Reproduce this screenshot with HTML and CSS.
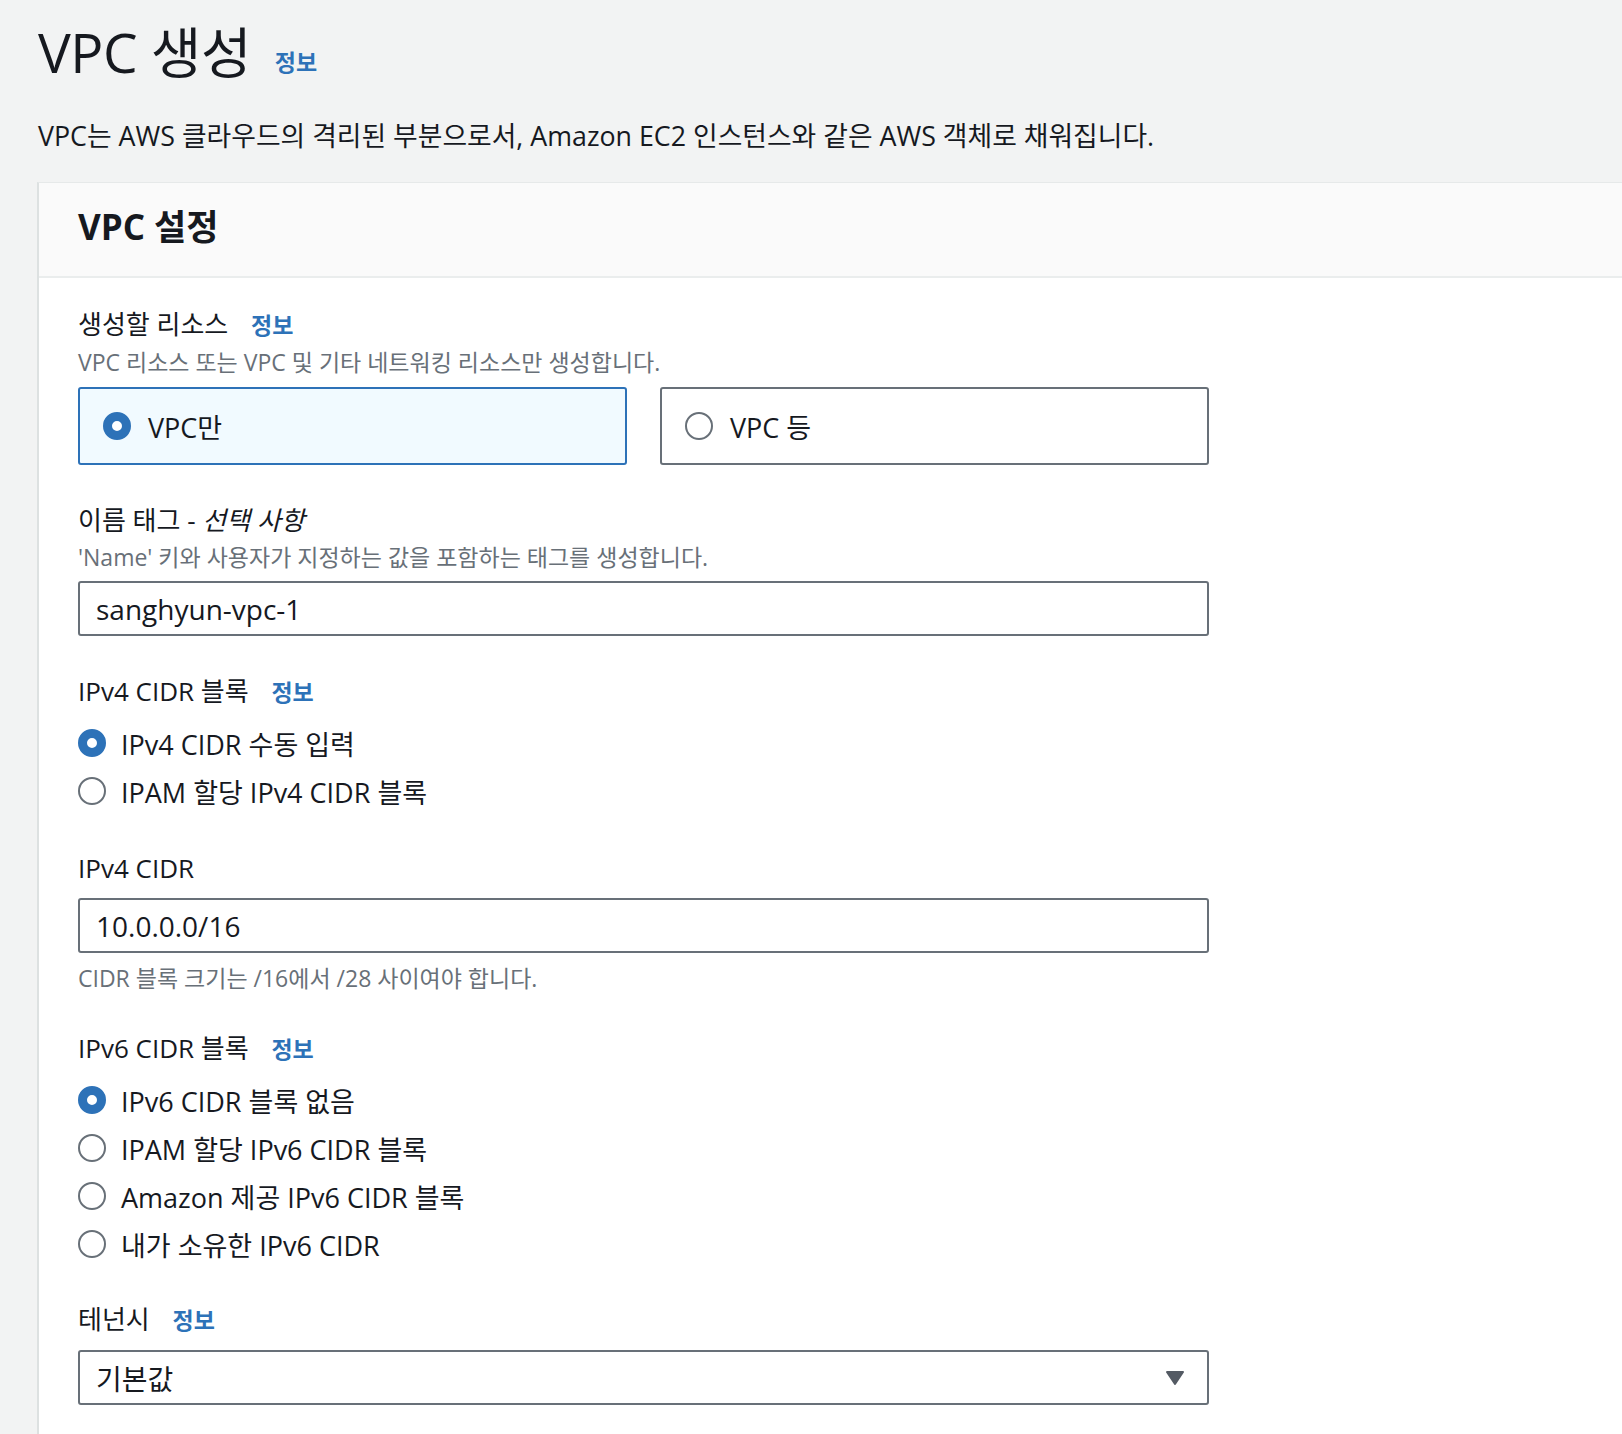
FILE: index.html
```html
<!DOCTYPE html>
<html lang="ko">
<head>
    <meta charset="UTF-8">
    <meta name="viewport" content="width=device-width, initial-scale=1.0">
    <title>VPC 생성</title>
    <link rel="stylesheet" href="styles.css">
</head>
<body>
    <div class="page">
        <div class="page-header">
            <h1>VPC 생성 <a class="info" href="#">정보</a></h1>
            <p class="page-desc">VPC는 AWS 클라우드의 격리된 부분으로서, Amazon EC2 인스턴스와 같은 AWS 객체로 채워집니다.</p>
        </div>

        <div class="card">
            <div class="card-header">
                <h2>VPC 설정</h2>
            </div>
            <div class="card-body">

                <div class="field">
                    <div class="label">생성할 리소스 <a class="info" href="#">정보</a></div>
                    <div class="hint">VPC 리소스 또는 VPC 및 기타 네트워킹 리소스만 생성합니다.</div>
                    <div class="tiles">
                        <label class="tile selected">
                            <span class="radio checked"></span>
                            <span>VPC만</span>
                        </label>
                        <label class="tile">
                            <span class="radio"></span>
                            <span>VPC 등</span>
                        </label>
                    </div>
                </div>

                <div class="field">
                    <div class="label">이름 태그 - <em>선택 사항</em></div>
                    <div class="hint">'Name' 키와 사용자가 지정하는 값을 포함하는 태그를 생성합니다.</div>
                    <div class="input">sanghyun-vpc-1</div>
                </div>

                <div class="field">
                    <div class="label">IPv4 CIDR 블록 <a class="info" href="#">정보</a></div>
                    <div class="radio-group">
                        <label class="radio-row"><span class="radio checked"></span>IPv4 CIDR 수동 입력</label>
                        <label class="radio-row"><span class="radio"></span>IPAM 할당 IPv4 CIDR 블록</label>
                    </div>
                </div>

                <div class="field spaced">
                    <div class="label">IPv4 CIDR</div>
                    <div class="input no-hint">10.0.0.0/16</div>
                    <div class="hint after">CIDR 블록 크기는 /16에서 /28 사이여야 합니다.</div>
                </div>

                <div class="field">
                    <div class="label">IPv6 CIDR 블록 <a class="info" href="#">정보</a></div>
                    <div class="radio-group">
                        <label class="radio-row"><span class="radio checked"></span>IPv6 CIDR 블록 없음</label>
                        <label class="radio-row"><span class="radio"></span>IPAM 할당 IPv6 CIDR 블록</label>
                        <label class="radio-row"><span class="radio"></span>Amazon 제공 IPv6 CIDR 블록</label>
                        <label class="radio-row"><span class="radio"></span>내가 소유한 IPv6 CIDR</label>
                    </div>
                </div>

                <div class="field tenancy">
                    <div class="label">테넌시 <a class="info" href="#">정보</a></div>
                    <div class="input select no-hint">
                        <span>기본값</span>
                        <svg class="caret" width="20" height="16" viewBox="0 0 20 16">
                            <path d="M2 2 L18 2 L10 14 Z" fill="#545b64" stroke="#545b64" stroke-width="2" stroke-linejoin="round"/>
                        </svg>
                    </div>
                </div>

            </div>
        </div>
    </div>
</body>
</html>
```

FILE: styles.css
```css
body {
    margin: 0;
    background: #f2f3f3;
    color: #16191f;
    font-family: 'Open Sans', 'Noto Sans CJK KR', sans-serif;
    overflow: hidden;
}
.page {
    padding-left: 37px;
}
.page-header {
    padding: 20px 0 0 1px;
}
h1 {
    margin: 0;
    font-size: 55px;
    font-weight: 400;
    line-height: 64px;
    letter-spacing: -0.5px;
}
h1 .info {
    margin-left: 10px;
    vertical-align: 2px;
}
.info {
    color: #2d72b8;
    font-size: 23px;
    font-weight: 700;
    text-decoration: none;
    letter-spacing: 0;
}
.page-desc {
    margin: 24px 0 0;
    font-size: 26.8px;
    line-height: 36px;
}
.card {
    margin-top: 28px;
    background: #fff;
    border-top: 1px solid #e6e9e9;
    border-left: 2px solid #dde1e1;
    min-height: 1300px;
}
.card-header {
    height: 95px;
    box-sizing: border-box;
    background: #fafafa;
    border-bottom: 2px solid #eaeded;
    padding: 22px 0 0 39px;
}
.card-header h2 {
    margin: 0;
    font-size: 35px;
    font-weight: 700;
    line-height: 44px;
}
.card-body {
    padding: 28px 39px 0;
    width: 1131px;
}
.field {
    margin-bottom: 37px;
}
.field.spaced {
    margin-top: 41px;
}
.field.tenancy {
    margin-top: 39px;
}
.label {
    font-size: 26px;
    line-height: 36px;
}
.label .info {
    margin-left: 16px;
}
.label em {
    font-style: italic;
}
.hint {
    margin-top: 4px;
    font-size: 23px;
    line-height: 30px;
    color: #687078;
}
.hint.after {
    margin-top: 10px;
}
.tiles {
    margin-top: 10px;
    display: grid;
    grid-template-columns: 1fr 1fr;
    gap: 33px;
}
.tile {
    height: 78px;
    box-sizing: border-box;
    border: 2px solid #687078;
    border-radius: 3px;
    background: #fff;
    display: flex;
    align-items: center;
    gap: 17px;
    padding-left: 23px;
    font-size: 27px;
}
.tile.selected {
    background: #f1faff;
    border-color: #2d72b8;
}
.radio {
    width: 28px;
    height: 28px;
    box-sizing: border-box;
    border: 2px solid #687078;
    border-radius: 50%;
    background: #fff;
    flex: none;
}
.radio.checked {
    border: 9px solid #2d72b8;
}
.input {
    margin-top: 9px;
    height: 55px;
    box-sizing: border-box;
    border: 2px solid #687078;
    border-radius: 3px;
    background: #fff;
    padding-left: 16px;
    display: flex;
    align-items: center;
    font-size: 28px;
}
.input.no-hint {
    margin-top: 12px;
}
.select {
    justify-content: space-between;
    padding-right: 22px;
}
.radio-group {
    margin-top: 15px;
    display: flex;
    flex-direction: column;
    gap: 12px;
}
.radio-row {
    display: flex;
    align-items: center;
    gap: 15px;
    height: 36px;
    font-size: 27px;
}
```
